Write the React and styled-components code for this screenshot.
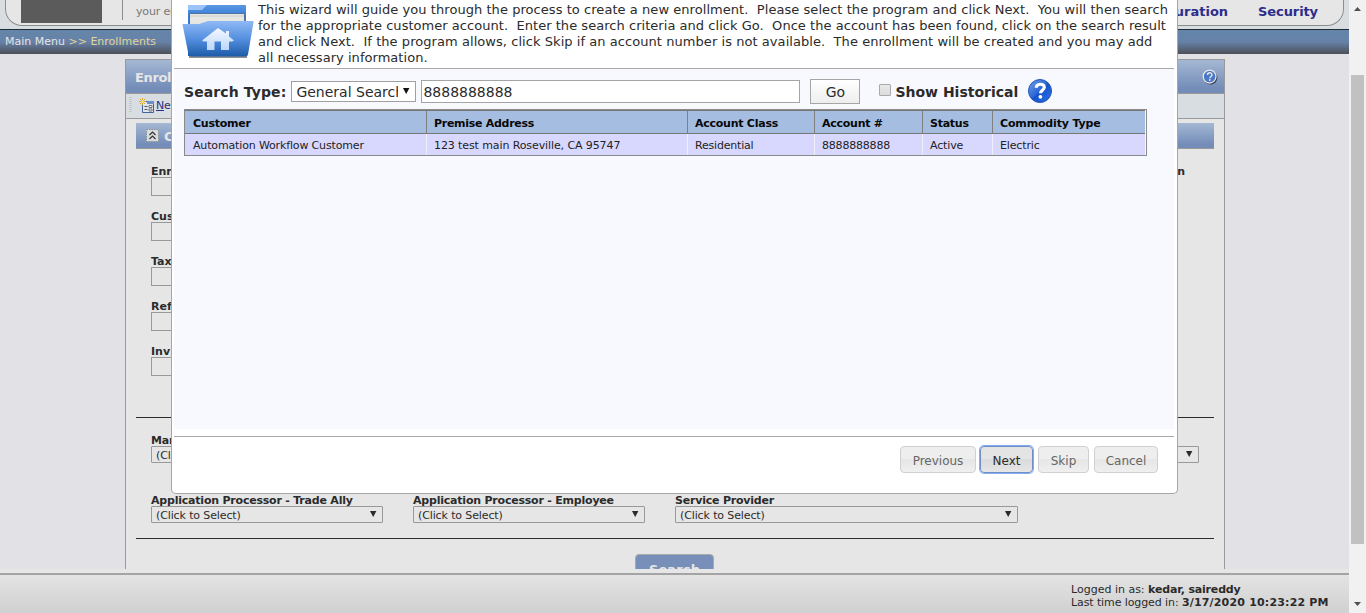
import React from "react";
import styled, { createGlobalStyle, css } from "styled-components";

const Global = createGlobalStyle`
  * { box-sizing: border-box; }
  html, body { margin: 0; padding: 0; overflow: hidden; }
  body { font-family: "DejaVu Sans", Verdana, sans-serif; color: #2b2b2b; }
`;

const Screen = styled.div`
  display: flex;
  width: 1366px;
  height: 613px;
  overflow: hidden;
`;
const Page = styled.div`
  position: relative;
  display: flex;
  flex-direction: column;
  width: 1349px;
  height: 613px;
  overflow: hidden;
  background: #e2e1e6;
`;
const T = styled.span`
  white-space: pre;
  letter-spacing: ${(p) => p.$ls || 0}px;
`;
const Strong = styled(T)`
  font-weight: bold;
`;

/* page header */
const Header = styled.header`
  height: 29px;
  padding: 0 5px;
  background: #d8dde2;
`;
const HeaderBox = styled.div`
  display: flex;
  height: 26px;
  border: 1px solid #8c8c8c;
  border-top: 0;
  border-radius: 0 0 17px 17px;
  background: #e6e6e6;
  padding-left: 15px;
`;
const Logo = styled.div`
  width: 81px;
  height: 23px;
  background: #5b5b5b;
`;
const Slogan = styled.div`
  margin-left: 20px;
  height: 20px;
  padding: 5px 0 0 13px;
  border-left: 1px solid #8c8c8c;
  font-size: 11px;
  line-height: 13px;
  color: #777;
`;
const Menu = styled.nav`
  display: flex;
  gap: 30px;
  margin-left: auto;
  padding: 4px 25px 0 0;
  font-size: 13px;
  line-height: 16px;
  font-weight: bold;
  color: #2c2c8b;
`;
const Crumbs = styled.div`
  height: 25px;
  flex: none;
  border-top: 1px solid #1f2c33;
  background: linear-gradient(#6486a8, #6781a8 50%, #4c5058);
  padding: 5px 0 0 5px;
  font-size: 11px;
  line-height: 14px;
  color: #e4e4e4;
  em { font-style: normal; color: #e0d596; }
`;

/* enrollment panel */
const Panel = styled.section`
  width: 1100px;
  height: 510px;
  flex: none;
  margin: 5px 0 0 125px;
  border: 1px solid #999;
  border-bottom: 0;
  background: #e6e6e6;
  overflow: hidden;
`;
const blueBar = css`
  background: linear-gradient(#a5b8d4, #748db8 85%);
  color: #e6e6e6;
  font-weight: bold;
`;
const PanelTitle = styled.div`
  ${blueBar}
  display: flex;
  justify-content: space-between;
  height: 34px;
  border-bottom: 1px solid #999;
  padding: 9px 6px 0 9px;
  font-size: 13px;
  line-height: 18px;
`;
const Toolbar = styled.div`
  display: flex;
  align-items: center;
  height: 25px;
  border-bottom: 1px solid #999;
  background: #d8dde1;
  padding: 0 0 2px 3px;
  font-size: 11px;
  color: #2c2c6b;
  svg { margin-right: 2px; }
  u { color: #2c2c8b; }
`;
const Grip = styled.div`
  width: 3px;
  height: 16px;
  margin-right: 7px;
  background: repeating-linear-gradient(#c3c8cc 0 1px, #d8dde1 1px 2px);
`;
const SectionBar = styled.div`
  ${blueBar}
  display: flex;
  align-items: center;
  gap: 5px;
  height: 26px;
  margin: 4px 10px 0;
  padding-left: 10px;
  border-bottom: 1px solid #999;
  font-size: 13px;
  span { padding-top: 2px; }
`;
const Fields = styled.div`
  display: flex;
  justify-content: space-between;
  margin: 0 10px;
  height: 269px;
  padding: 16px 29px 0 15px;
  border-bottom: 1px solid #2b2b2b;
`;
const FieldColumn = styled.div`
  display: flex;
  flex-direction: column;
  gap: 14px;
`;
const Label = styled.div`
  height: 12px;
  font-size: 11px;
  line-height: 13px;
  font-weight: bold;
  white-space: nowrap;
`;
const Input = styled.div`
  width: 232px;
  height: 19px;
  border: 1px solid #999;
`;
const Selects = styled.div`
  margin: 0 10px;
  padding: 16px 15px 0;
  height: 121px;
  border-bottom: 1px solid #2b2b2b;
`;
const SelectRow = styled.div`
  display: flex;
  justify-content: ${(p) => (p.$spread ? "space-between" : "flex-start")};
  gap: 30px;
  height: 60px;
`;
const Select = styled.div`
  display: flex;
  align-items: center;
  justify-content: space-between;
  width: ${(p) => p.$w}px;
  height: 17px;
  border: 1px solid #999;
  border-radius: 1px;
  padding: 0 5px 0 4px;
  font-size: 11px;
  line-height: 17px;
  span { padding-top: 1px; }
`;
const SearchButton = styled.div`
  ${blueBar}
  width: 79px;
  height: 30px;
  margin: 15px auto 0 509px;
  border: 1px solid #aaa;
  border-radius: 4px;
  background: #7890b9;
  text-align: center;
  font-size: 13px;
  line-height: 30px;
`;
const Footer = styled.footer`
  flex: none;
  height: 44px;
  border-top: 4px solid #e6e6e6;
`;
const FooterBar = styled.div`
  height: 40px;
  border-top: 2px solid #a4a4a4;
  background: linear-gradient(#e3e3e3, #d0d0d0);
  padding: 8px 0 0 1071px;
  font-size: 11px;
  line-height: 13px;
`;

/* wizard dialog */
const Dialog = styled.div`
  position: absolute;
  left: 171px;
  top: 0;
  width: 1007px;
  height: 494px;
  padding: 0 2px;
  border: 1px solid #a5a5a5;
  border-top: 0;
  border-radius: 0 0 5px 5px;
  background: #fff;
`;
const Intro = styled.div`
  display: flex;
  width: 1000px;
  height: 69px;
  border-bottom: 1px solid #aaa;
  padding: 2px 0 0 8px;
`;
const IntroText = styled.div`
  margin-left: 4px;
  font-size: 13px;
  line-height: 16px;
  white-space: nowrap;
`;
const Body = styled.div`
  height: 360px;
  background: #f8f9ff;
  padding: 9px 0 0 10px;
  width: 1000px;
`;
const SearchRow = styled.div`
  display: flex;
  align-items: center;
  height: 26px;
  margin-bottom: 5px;
  font-size: 14px;
  > ${Strong} { padding-top: 2px; }
`;
const TypeSelect = styled.div`
  display: flex;
  align-items: center;
  justify-content: space-between;
  width: 125px;
  height: 21px;
  margin-left: 5px;
  padding: 0 5px 0 4px;
  border: 1px solid #a0a0a0;
  background: #fff;
  div { width: 102px; overflow: hidden; padding-top: 1px; }
`;
const Query = styled.div`
  width: 379px;
  height: 23px;
  margin: 0 10px 0 5px;
  padding-left: 1px;
  border: 1px solid #a5a5a5;
  background: #fff;
  line-height: 22px;
`;
const Go = styled.div`
  width: 50px;
  height: 25px;
  border: 1px solid #a5a5a5;
  background: linear-gradient(#fff, #eee);
  text-align: center;
  line-height: 25px;
`;
const Check = styled.div`
  width: 12px;
  height: 12px;
  margin: -3px 4px 0 19px;
  border: 1px solid #aaa;
  border-radius: 1px;
  background: linear-gradient(#e8e8e8, #dcdcdc);
`;
const HelpLink = styled.div`
  display: flex;
  margin-left: 10px;
`;
const Table = styled.div`
  width: 963px;
  height: 47px;
  border: 1px solid #8a8a8a;
  padding-right: 1px;
  background: #f8f9ff;
`;
const Row = styled.div`
  display: grid;
  grid-template-columns: 242px 261px 127px 108px 70px 1fr;
  font-size: 11px;
  line-height: 14px;
  height: ${(p) => (p.$head ? 24 : 21)}px;
  font-weight: ${(p) => (p.$head ? "bold" : "normal")};
  background: ${(p) => (p.$head ? "#a5bde0" : "#d8d8ff")};
  color: ${(p) => (p.$head ? "#080808" : "#222")};
  border-top: ${(p) => (p.$head ? "1px solid #777" : "0")};
  border-bottom: ${(p) => (p.$head ? "1px solid #777" : "0")};
`;
const Cell = styled.div`
  padding: ${(p) => (p.$head ? 6 : 5)}px 0 0 7px;
  border-right: 1px solid ${(p) => (p.$head ? "#808080" : "#f0eefa")};
  &:first-child { padding-left: 8px; }
  &:last-child { border-right: 0; }
`;
const Actions = styled.div`
  display: flex;
  justify-content: flex-end;
  gap: 5px;
  margin-top: 7px;
  height: 57px;
  border-top: 1px solid #aaa;
  padding: 9px 16px 0 0;
  width: 1000px;
`;
const Button = styled.div`
  width: ${(p) => p.$w}px;
  height: 27px;
  border: 1px solid ${(p) => (p.$focus ? "#6f8fc4" : "#d0d0d0")};
  border-radius: 4px;
  ${(p) => p.$focus && "box-shadow: 0 0 0 1px #83aef5; margin-left: -1px;"}
  background: ${(p) =>
    p.$focus
      ? "linear-gradient(#e4e4e4 50%, #dadada 50%, #e6e6e6)"
      : "linear-gradient(#eeeeee 50%, #e6e6e6 50%, #efefef)"};
  color: ${(p) => (p.$focus ? "#2b2b2b" : "#666")};
  font-size: 12px;
  line-height: 28px;
  text-align: center;
`;

/* browser scrollbar */
const Scroll = styled.div`
  display: flex;
  flex-direction: column;
  align-items: center;
  justify-content: space-between;
  width: 17px;
  background: #f1f1f1;
  padding: 7px 0 7px;
`;
const Thumb = styled.div`
  width: 13px;
  height: 469px;
  margin: 6px 0 0 0;
  background: #c1c1c1;
`;

const Caret = ({ color = "#2b2b2b" }) => (
  <svg width="8" height="9" viewBox="0 0 8 9"><path d="M1 1h6.400L4.200 7z" fill={color} /></svg>
);

const FolderIcon = () => (
  <svg width="72" height="58" viewBox="0 0 72 58">
    <defs>
      <linearGradient id="back" x1="0" y1="0" x2="0" y2="1"><stop offset="0" stopColor="#5a97e4" /><stop offset=".2" stopColor="#3b7fd8" /><stop offset="1" stopColor="#2163b4" /></linearGradient>
      <linearGradient id="front" x1="0" y1="0" x2="0" y2="1"><stop offset="0" stopColor="#8fb9f5" /><stop offset=".5" stopColor="#5590e0" /><stop offset="1" stopColor="#1c5ba8" /></linearGradient>
      <linearGradient id="house" x1="0" y1="0" x2="0" y2="1"><stop offset="0" stopColor="#f4f9ff" /><stop offset="1" stopColor="#bcd6fa" /></linearGradient>
    </defs>
    <path d="M7 54h58v2H7z" fill="#555" opacity=".65" />
    <path d="M6 4q0-1 1-1h56q1 0 1 1v50H6z" fill="url(#back)" />
    <path d="M6 4q0-1 1-1h18l-5 5H6z" fill="#9cc4f8" />
    <path d="M7.500 11.500h55v16h-55z" fill="#e6e6e3" stroke="#3c5f92" strokeWidth=".8" />
    <path d="M8 14h54" stroke="#cfcfca" />
    <path d="M.5 22.500Q.5 22 1 22h16l9-3h45q.8 0 .6.800L66 52.500q-.3 2-2.500 2H9q-2.200 0-2.500-2z" fill="url(#front)" />
    <path d="M36 26 20 38.500l2 1h3V48h7.500v-8.500H39V48h8v-8.500h3l2-1-5-4V29h-3v2.500z" fill="url(#house)" />
  </svg>
);

const HelpIcon = ({ size }) => (
  <svg width={size} height={size} viewBox="0 0 24 24">
    <defs>
      <linearGradient id="help" x1="0" y1="0" x2="1" y2="1"><stop offset="0" stopColor="#74a2ee" /><stop offset=".48" stopColor="#2b66d4" /><stop offset=".52" stopColor="#1552cc" /><stop offset="1" stopColor="#2f74e6" /></linearGradient>
    </defs>
    <circle cx="12" cy="12" r="11.500" fill="url(#help)" stroke="#2456b4" />
    <path d="M8.300 8.800c0-4.600 8-4.600 8-.6 0 3-3.800 3-3.800 6" fill="none" stroke="#fff" strokeWidth="3.200" />
    <circle cx="12.400" cy="17.800" r="1.900" fill="#fff" />
  </svg>
);

const SmallHelp = () => (
  <svg width="16" height="16" viewBox="0 0 16 16">
    <circle cx="8.600" cy="8.600" r="6.900" fill="#33405c" />
    <circle cx="7.600" cy="7.600" r="6.400" fill="#4c78c8" stroke="#e6e6e6" strokeWidth="1.300" />
    <path d="M5.500 6c0-3 4.500-3 4.500-.3 0 1.800-2.200 1.700-2.200 3.600" fill="none" stroke="#e6e6e6" strokeWidth="1.400" />
    <circle cx="7.800" cy="11" r=".9" fill="#e6e6e6" />
  </svg>
);

const NewIcon = () => (
  <svg width="15" height="15" viewBox="0 0 15 15">
    <path d="M3.500 3.500h11v11h-11z" fill="#dfe5ee" stroke="#47639c" />
    <path d="M8 3h7v3H8z" fill="#6d8fc9" />
    <path d="M5.500 8.500h3M5.500 11.500h3" stroke="#555" />
    <path d="M10 7.500h3v2h-3zM10 11h3v2h-3z" fill="#fff" stroke="#555" strokeWidth=".8" />
    <path d="M3.500 0v7M0 3.500h7M1 1l5 5M6 1 1 6" stroke="#d7a92c" />
    <circle cx="3.500" cy="3.500" r="1.500" fill="#f2e08a" />
  </svg>
);

const CollapseIcon = () => (
  <svg width="13" height="13" viewBox="0 0 13 13">
    <path d="M.5.500h12v12H.500z" fill="#d8dcdc" stroke="#8a9190" strokeDasharray="1.500 1" />
    <path d="M3.500 6l3-3 3 3M3.500 10l3-3 3 3" fill="none" stroke="#333" strokeWidth="1.200" />
  </svg>
);

const intro = [
  ["This wizard will guide you through the process to create a new enrollment.  Please select the program and click Next.  You will then search", 0.055],
  ["for the appropriate customer account.  Enter the search criteria and click Go.  Once the account has been found, click on the search result", 0.04],
  ["and click Next.  If the program allows, click Skip if an account number is not available.  The enrollment will be created and you may add", 0.058],
  ["all necessary information.", 0.04],
];
const heads = [
  ["Customer", -0.25],
  ["Premise Address", -0.28],
  ["Account Class", -0.25],
  ["Account #", -0.25],
  ["Status", -0.25],
  ["Commodity Type", -0.15],
];
const cells = [
  ["Automation Workflow Customer", -0.15],
  ["123 test main Roseville, CA 95747", -0.1],
  ["Residential", -0.2],
  ["8888888888", -0.2],
  ["Active", -0.15],
  ["Electric", -0.15],
];

function Dropdown({ w, label, value }) {
  return (
    <div>
      <Label><T $ls={-0.21}>{label}</T></Label>
      <Select $w={w}><T $ls={-0.12}>{value}</T><Caret /></Select>
    </div>
  );
}

export default function App() {
  return (
    <Screen>
      <Global />
      <Page>
        <Header>
          <HeaderBox>
            <Logo />
            <Slogan><T $ls={-0.15}>your en</T></Slogan>
            <Menu><T>uration</T><T $ls={-0.1}>Security</T></Menu>
          </HeaderBox>
        </Header>
        <Crumbs><T>Main Menu <em>&gt;&gt; Enrollments</em></T></Crumbs>
        <Panel>
          <PanelTitle><T $ls={-0.35}>Enrol</T><SmallHelp /></PanelTitle>
          <Toolbar><Grip /><NewIcon /><T $ls={-0.3}><u>N</u>ew</T></Toolbar>
          <SectionBar><CollapseIcon /><T>C</T></SectionBar>
          <Fields>
            <FieldColumn>
              {["Enr", "Cus", "Tax", "Ref", "Inv"].map((l) => (
                <div key={l}><Label>{l}</Label><Input /></div>
              ))}
            </FieldColumn>
            <Label>n</Label>
          </Fields>
          <Selects>
            <SelectRow $spread>
              <Dropdown w={232} label="Mar" value="(Cl" />
              <Dropdown w={232} label="" value="" />
            </SelectRow>
            <SelectRow>
              <Dropdown w={232} label="Application Processor - Trade Ally" value="(Click to Select)" />
              <Dropdown w={232} label="Application Processor - Employee" value="(Click to Select)" />
              <Dropdown w={343} label="Service Provider" value="(Click to Select)" />
            </SelectRow>
          </Selects>
          <SearchButton><T $ls={0.15}>Search</T></SearchButton>
        </Panel>
        <Footer>
          <FooterBar>
            <div><T>Logged in as: </T><Strong $ls={-0.18}>kedar, saireddy</Strong></div>
            <div><T $ls={-0.1}>Last time logged in: </T><Strong $ls={0.18}>3/17/2020 10:23:22 PM</Strong></div>
          </FooterBar>
        </Footer>
        <Dialog>
          <Intro>
            <FolderIcon />
            <IntroText>
              {intro.map(([t, ls]) => <div key={t}><T $ls={ls}>{t}</T></div>)}
            </IntroText>
          </Intro>
          <Body>
            <SearchRow>
              <Strong $ls={0.1}>Search Type:</Strong>
              <TypeSelect><div><T>General Search</T></div><Caret color="#111" /></TypeSelect>
              <Query><T>8888888888</T></Query>
              <Go>Go</Go>
              <Check />
              <Strong>Show Historical</Strong>
              <HelpLink><HelpIcon size={24} /></HelpLink>
            </SearchRow>
            <Table>
              <Row $head>{heads.map(([h, ls]) => <Cell $head key={h}><T $ls={ls}>{h}</T></Cell>)}</Row>
              <Row>{cells.map(([c, ls]) => <Cell key={c}><T $ls={ls}>{c}</T></Cell>)}</Row>
            </Table>
          </Body>
          <Actions>
            <Button $w={76}>Previous</Button>
            <Button $w={53} $focus>Next</Button>
            <Button $w={51}>Skip</Button>
            <Button $w={64}>Cancel</Button>
          </Actions>
        </Dialog>
      </Page>
      <Scroll>
        <svg width="7" height="4" viewBox="0 0 7 4"><path d="M0 4h7L3.500 0z" fill="#505050" /></svg>
        <Thumb />
        <svg width="7" height="4" viewBox="0 0 7 4"><path d="M0 0h7L3.500 4z" fill="#505050" /></svg>
      </Scroll>
    </Screen>
  );
}
